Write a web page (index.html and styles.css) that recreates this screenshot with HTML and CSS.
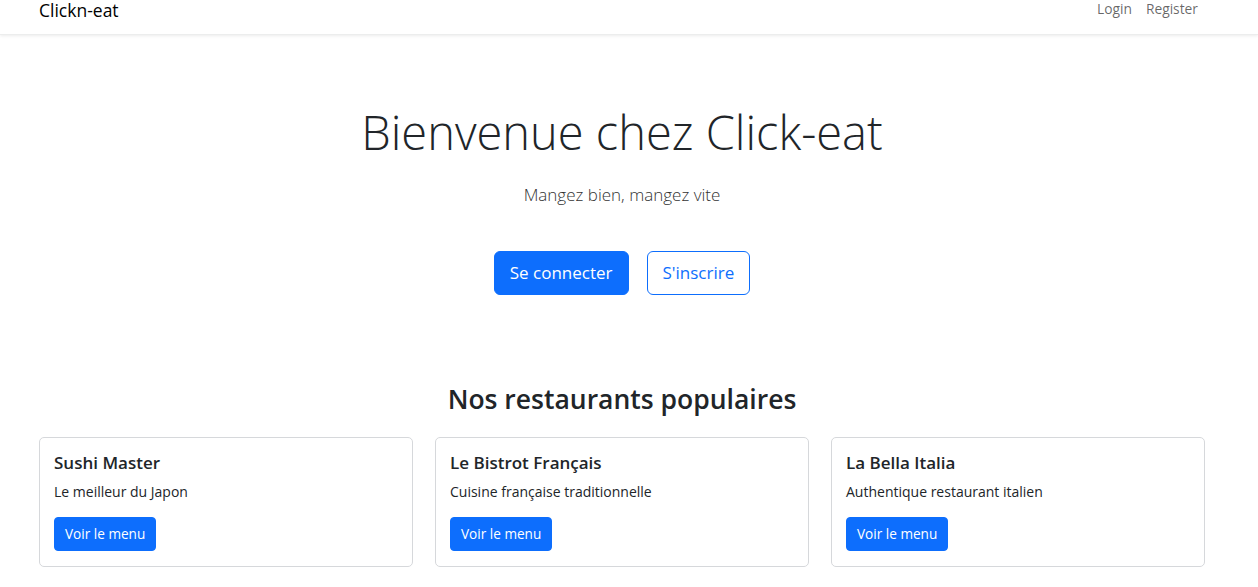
FILE: index.html
```html
<!DOCTYPE html>
<html lang="fr">
<head>
<meta charset="utf-8">
<title>Clickn-eat</title>
<link rel="stylesheet" href="styles.css">
</head>
<body>
<nav class="navbar">
  <div class="nav-inner">
    <a class="brand" href="#">Clickn-eat</a>
    <div class="nav-links">
      <a href="#">Login</a>
      <a href="#">Register</a>
    </div>
  </div>
</nav>
<main class="container">
  <section class="hero">
    <h1 class="display">Bienvenue chez Click-eat</h1>
    <p class="lead">Mangez bien, mangez vite</p>
    <div class="hero-actions">
      <a class="btn btn-lg btn-primary" href="#">Se connecter</a>
      <a class="btn btn-lg btn-outline" href="#">S'inscrire</a>
    </div>
  </section>
  <section class="popular">
    <h2>Nos restaurants populaires</h2>
    <div class="cards">
      <div class="card">
        <h5 class="card-title">Sushi Master</h5>
        <p class="card-text">Le meilleur du Japon</p>
        <a class="btn btn-primary btn-card" href="#">Voir le menu</a>
      </div>
      <div class="card">
        <h5 class="card-title">Le Bistrot Français</h5>
        <p class="card-text">Cuisine française traditionnelle</p>
        <a class="btn btn-primary btn-card" href="#">Voir le menu</a>
      </div>
      <div class="card">
        <h5 class="card-title">La Bella Italia</h5>
        <p class="card-text">Authentique restaurant italien</p>
        <a class="btn btn-primary btn-card" href="#">Voir le menu</a>
      </div>
    </div>
  </section>
</main>
</body>
</html>
```

FILE: styles.css
```css
* { box-sizing: border-box; }
html, body { margin: 0; padding: 0; }
body {
  font-family: "Open Sans", "Noto Sans", "Liberation Sans", sans-serif;
  color: #212529;
  background: #fff;
  font-size: 16px;
  line-height: 1.5;
}
a { text-decoration: none; }

.navbar {
  height: 35px;
  background: #fff;
  box-shadow: 0 1px 3px rgba(0,0,0,0.08);
  border-bottom: 1px solid #eceded;
}
.nav-inner {
  margin: 0 39px;
  width: 1166px;
  height: 34px;
  display: flex;
  justify-content: space-between;
  align-items: flex-start;
}
.brand {
  font-size: 17.5px;
  line-height: 20px;
  color: #000;
}
.nav-links {
  display: flex;
  gap: 14px;
  padding-right: 7px;
}
.nav-links a {
  font-size: 13.8px;
  line-height: 18px;
  color: rgba(0,0,0,0.6);
}

.container {
  width: 1166px;
  margin: 0 39px;
}
.hero {
  text-align: center;
  padding-top: 68px;
}
.display {
  margin: 0;
  font-size: 47px;
  font-weight: 300;
  line-height: 58px;
  color: #212529;
}
.lead {
  margin: 21px 0 0;
  font-size: 17px;
  font-weight: 300;
  line-height: 26px;
  color: #333;
}
.hero-actions {
  margin-top: 43px;
  display: flex;
  justify-content: center;
  gap: 18px;
}
.btn {
  display: inline-block;
  border: 1px solid #0d6efd;
  text-align: center;
}
.btn-lg {
  height: 44px;
  padding: 0 15px;
  font-size: 17px;
  line-height: 42px;
  border-radius: 6px;
}
.btn-primary {
  background: #0d6efd;
  color: #fff;
}
.btn-outline {
  background: #fff;
  color: #0d6efd;
}

.popular {
  margin-top: 86px;
}
.popular h2 {
  margin: 0;
  text-align: center;
  font-size: 26.5px;
  font-weight: 600;
  line-height: 36px;
  color: #212529;
}
.cards {
  margin-top: 20px;
  display: grid;
  grid-template-columns: repeat(3, 1fr);
  gap: 22px;
}
.card {
  border: 1px solid #d6d8db;
  border-radius: 5px;
  padding: 13px 15px 15px 14px;
  height: 130px;
}
.card-title {
  margin: 0;
  font-size: 17px;
  font-weight: 600;
  line-height: 24px;
  color: #212529;
}
.card-text {
  margin: 6px 0 15px;
  font-size: 14px;
  line-height: 21px;
}
.btn-card {
  height: 34px;
  padding: 0 10px;
  font-size: 13.6px;
  line-height: 32px;
  border-radius: 4px;
}
```
